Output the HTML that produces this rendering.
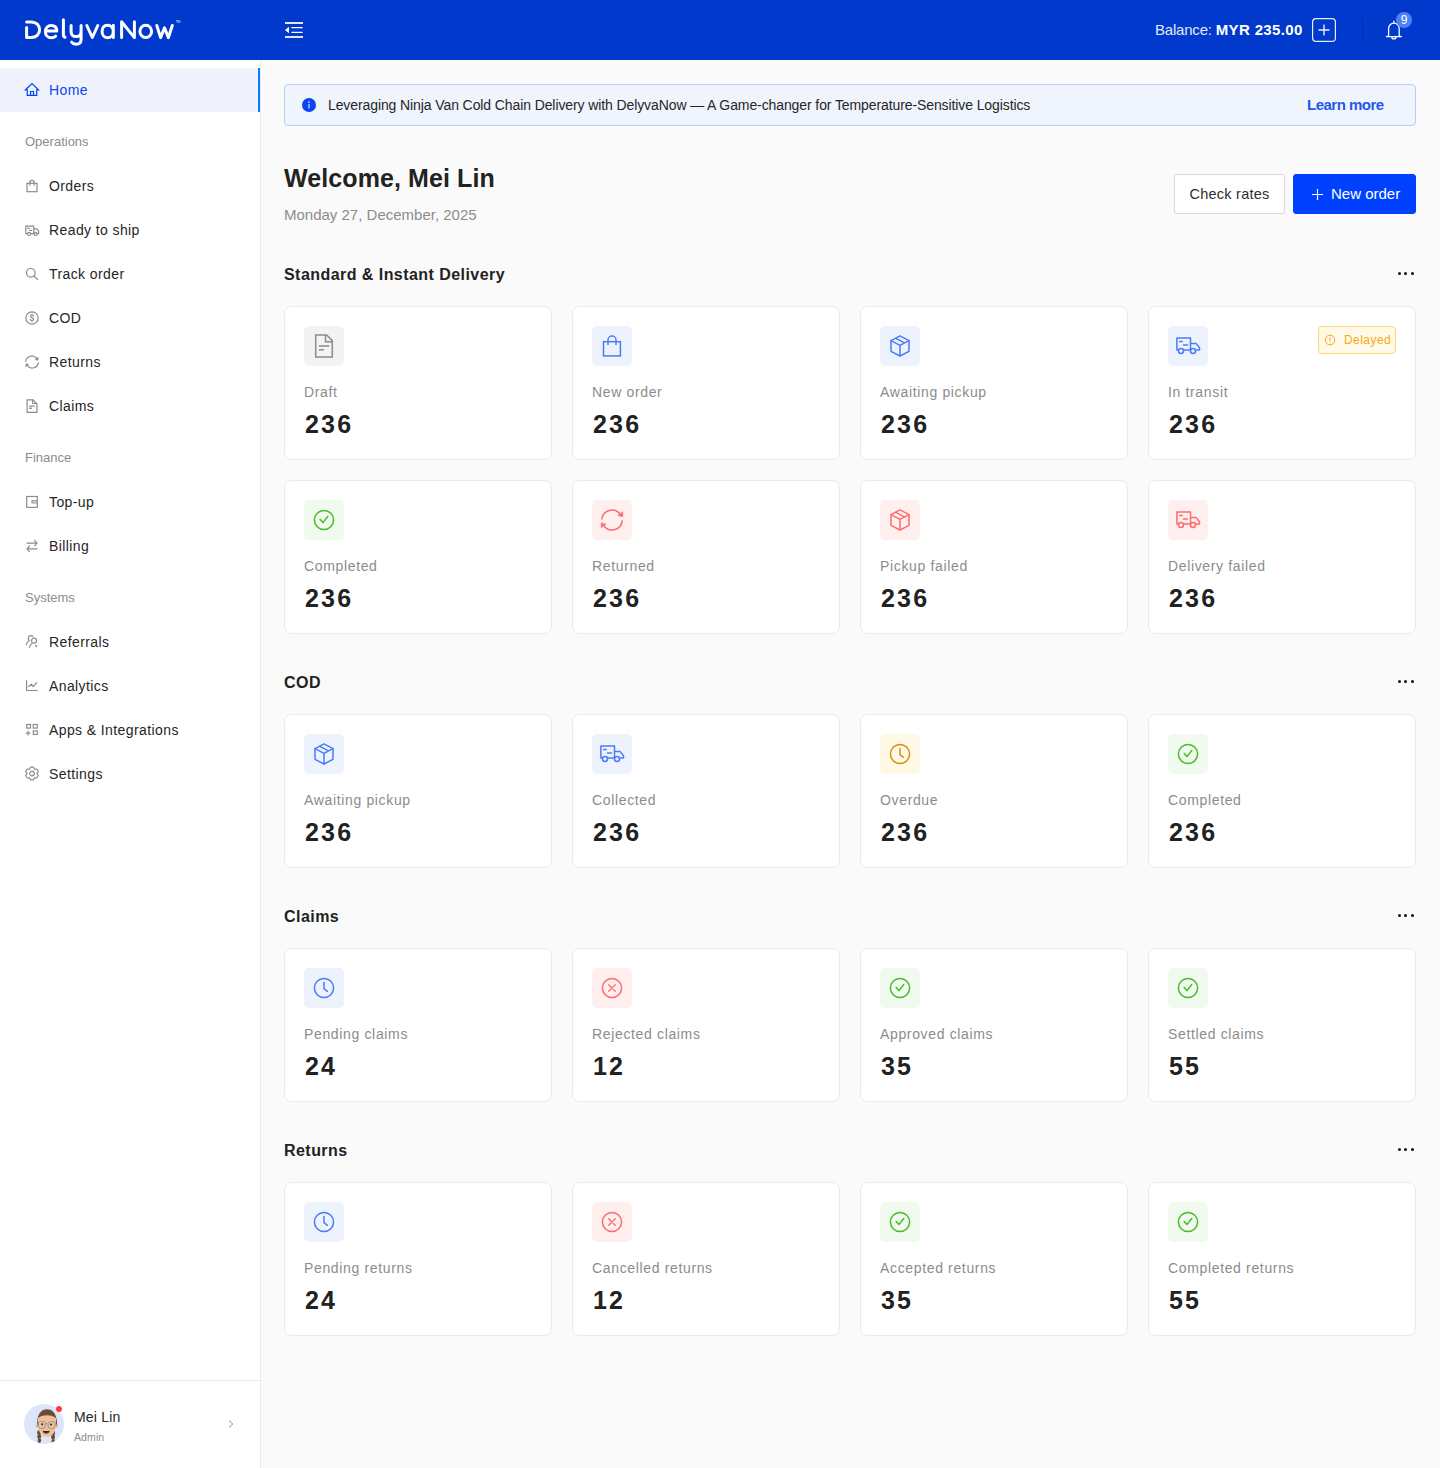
<!DOCTYPE html>
<html><head><meta charset="utf-8">
<style>
*{box-sizing:border-box;margin:0;padding:0}
html,body{width:1440px;height:1468px;overflow:hidden}
body{font-family:"Liberation Sans",sans-serif;background:#FAFAFA;color:#222;position:relative}
.abs{position:absolute}
.hdr{position:absolute;left:0;top:0;width:1440px;height:60px;background:#0039CC}
.side{position:absolute;left:0;top:60px;width:261px;height:1408px;background:#fff;border-right:1px solid #EBEBEB}
.nav{position:absolute;left:0;width:260px;height:44px;padding-left:24px;font-size:14px;letter-spacing:0.4px;color:#262626;line-height:44px;white-space:nowrap}
.nav svg{position:absolute;left:24px;top:14px;width:16px;height:16px;color:#8C8C8C}
.nav span{position:absolute;left:49px;top:0}
.nav.active{background:#F0F3FC;color:#0B45F5}
.nav.active svg{color:#0041FF}
.nav.active:after{content:"";position:absolute;right:0;top:0;width:2px;height:44px;background:#0A7BFF}
.lbl{position:absolute;left:25px;font-size:13px;color:#8C8C8C;line-height:16px}
.card{position:absolute;width:268px;height:154px;background:#fff;border:1px solid #EBEBEB;border-radius:8px}
.ib{position:absolute;left:19px;top:19px;width:40px;height:40px;border-radius:5px}
.ib svg{position:absolute;left:0;top:0;width:40px;height:40px}
.cl{position:absolute;left:19px;top:76px;font-size:14px;letter-spacing:0.65px;color:#8C8C8C;line-height:18px;white-space:nowrap}
.cv{position:absolute;left:20px;top:103px;font-size:25px;letter-spacing:2.2px;font-weight:bold;color:#222;line-height:28px}
.sec{position:absolute;left:284px;font-size:16px;letter-spacing:0.45px;font-weight:bold;color:#222;line-height:20px}
.dots{position:absolute;left:1398.2px;width:18px;height:4px}
.dots i{position:absolute;top:0;width:3px;height:3px;border-radius:50%;background:#111}
.g{background:#F3F3F3;color:#8C8C8C}
.b{background:#EEF2FD;color:#497BFA}
.r{background:#FFEFEF;color:#FF6B6B}
.gr{background:#F1FAEE;color:#4CBB2B}
.y{background:#FFF8E6;color:#D4900F}
.badge{position:absolute;left:169px;top:19px;width:78px;height:28px;border:1px solid #FFD36E;background:#FFFAE8;border-radius:4px;font-size:12px;letter-spacing:0.45px;color:#F8A91A;line-height:26px}
.badge svg{position:absolute;left:5px;top:7px}
.badge span{position:absolute;left:25px;top:0}
.banner{position:absolute;left:284px;top:84px;width:1132px;height:42px;background:#F0F4FD;border:1px solid #B8CDF7;border-radius:4px}
.btn{position:absolute;top:174px;height:40px;border-radius:3px;font-size:15px;line-height:38px;white-space:nowrap}
</style></head>
<body>
<div class="hdr">
  <svg class="abs" style="left:0;top:0" width="200" height="60" viewBox="0 0 200 60" fill="none" stroke="#fff" stroke-width="3" stroke-linecap="round" stroke-linejoin="round">
    <path d="M26.6 21.9H31.2C36.2 21.9 39.6 25.2 39.6 29.7C39.6 34.2 36.2 37.5 31.2 37.5H26.6V27.6"/>
    <path d="M45.5 30.9H56.8C56.8 27.3 54.6 25.5 51.2 25.5C47.7 25.5 45.4 28.2 45.4 31.7C45.4 35.2 47.9 37.8 51.3 37.8C53.3 37.8 54.8 37.1 55.6 36.2"/>
    <path d="M63.4 19.7V34.8C63.4 36.2 64 37 65 37.3"/>
    <path d="M71.1 25.5V31.4C71.1 34.6 73.1 36.5 76.1 36.5C79.1 36.5 81.1 34.6 81.1 31.4V25.5M81.1 31.4V39.2C81.1 42.4 79 44.2 76.1 44.2C74.3 44.2 72.6 43.5 71.6 42.2"/>
    <path d="M86.8 25.5L92.3 37.5L97.8 25.5"/>
    <path d="M113.3 25.3V37.6M113.3 31.5C113.3 27.9 110.8 25.2 107.4 25.2C104 25.2 102.1 27.9 102.1 31.5C102.1 35 104.1 37.7 107.4 37.7C110.8 37.7 113.3 35 113.3 31.5"/>
    <path d="M121.6 37.6V21.7L134.4 37.6V21.7"/>
    <ellipse cx="145.75" cy="31.4" rx="5.85" ry="6.2"/>
    <path d="M156.8 25.5L160.6 37.6L164.5 27.8L168.4 37.6L172.3 25.5"/>
    <path d="M176.3 20.6H178M177.15 20.6V22.5M178.6 22.5V20.6L179.3 21.4L180 20.6V22.5" stroke-width="0.5"/>
  </svg>
  <svg class="abs" style="left:284px;top:21px" width="20" height="18" viewBox="0 0 20 18" fill="#fff">
    <rect x="1" y="1" width="18" height="2" opacity="0.88"/>
    <rect x="7.3" y="6" width="11.4" height="1.3" rx="0.6"/>
    <rect x="7.3" y="10.8" width="11.4" height="1.3" rx="0.6"/>
    <rect x="1" y="15" width="18" height="2" opacity="0.88"/>
    <path d="M5 5.8V12.2L1 9Z"/>
  </svg>
  <div class="abs" style="left:1155px;top:21px;font-size:15px;line-height:18px;color:#fff;white-space:nowrap"><span style="color:#E3E8F7;letter-spacing:-0.2px">Balance: </span><b style="letter-spacing:0.35px">MYR 235.00</b></div>
  <svg class="abs" style="left:1312px;top:18px" width="24" height="24" viewBox="0 0 24 24" fill="none" stroke="#E8ECF8" stroke-width="1.2">
    <rect x="0.6" y="0.6" width="22.8" height="22.8" rx="3.5"/>
    <path d="M6.4 12H17.6M12 6.4V17.6" stroke-width="1.4"/>
  </svg>
  <div class="abs" style="left:1362px;top:18px;width:1px;height:24px;background:#0030AA"></div>
  <svg class="abs" style="left:1384px;top:18px" width="20" height="24" viewBox="0 0 20 24" fill="none" stroke="#fff" stroke-width="1.3" stroke-linejoin="round" stroke-linecap="round">
    <path d="M4.6 17.6V10.5A5.3 5.3 0 0 1 15.2 10.5V17.6C15.2 18.2 16 18.6 17.4 18.6H2.4C3.8 18.6 4.6 18.2 4.6 17.6Z"/>
    <path d="M9.9 3.2V5.1M7.9 18.9A2 2 0 0 0 11.9 18.9"/>
  </svg>
  <div class="abs" style="left:1396px;top:12px;width:16px;height:16px;border-radius:50%;background:#5080F8;color:#fff;font-size:12px;line-height:16px;text-align:center">9</div>
</div>
<div class="side">
<div class="nav active" style="top:8px"><svg viewBox="0 0 16 16" fill="none" stroke="currentColor" stroke-width="1.2" stroke-linecap="round" stroke-linejoin="round"><path d="M1.5 7.8L8 1.5L14.5 7.8H12.75V13.3H3.25V7.8Z" stroke-linejoin="miter" stroke-linecap="butt"/><path d="M6.6 13.3V9.5H9.5V13.3" stroke-linejoin="miter"/></svg><span>Home</span></div>
<div class="lbl" style="top:74px">Operations</div>
<div class="nav" style="top:104px"><svg viewBox="0 0 16 16" fill="none" stroke="currentColor" stroke-width="1.2" stroke-linecap="round" stroke-linejoin="round"><rect x="3" y="5.3" width="10" height="8.4" stroke-linejoin="miter"/><path d="M5.8 7.2V4.6A2.2 2.2 0 0 1 10.2 4.6V7.2"/></svg><span>Orders</span></div>
<div class="nav" style="top:148px"><svg viewBox="0 0 16 16" fill="none" stroke="currentColor" stroke-width="1.2" stroke-linecap="round" stroke-linejoin="round"><path d="M3.3 11.6H1.8V4.2H9.8V11.6M9.8 6.8H12.8L14.6 9.2V11.6H13M9.8 11.6H7"/><circle cx="5.1" cy="11.9" r="1.5"/><circle cx="11.5" cy="11.9" r="1.5"/><path d="M3.6 6.3H5.2M5.6 8.3H7.8"/></svg><span>Ready to ship</span></div>
<div class="nav" style="top:192px"><svg viewBox="0 0 16 16" fill="none" stroke="currentColor" stroke-width="1.2" stroke-linecap="round" stroke-linejoin="round"><circle cx="6.8" cy="6.8" r="4.3"/><path d="M10 10L13.6 13.6"/></svg><span>Track order</span></div>
<div class="nav" style="top:236px"><svg viewBox="0 0 16 16" fill="none" stroke="currentColor" stroke-width="1.2" stroke-linecap="round" stroke-linejoin="round"><circle cx="8" cy="8" r="6.2"/><path d="M9.6 5.9C9.3 5.3 8.7 5 8 5C7 5 6.4 5.5 6.4 6.3C6.4 7.9 9.7 7.2 9.7 9.1C9.7 9.9 9 10.5 8 10.5C7.2 10.5 6.6 10.1 6.3 9.5M8 4.2V5M8 10.5V11.6"/></svg><span>COD</span></div>
<div class="nav" style="top:280px"><svg viewBox="0 0 16 16" fill="none" stroke="currentColor" stroke-width="1.2" stroke-linecap="round" stroke-linejoin="round"><path d="M1.7 7.4A6.1 6.1 0 0 1 12.6 4.4M14.3 8.6A6.1 6.1 0 0 1 3.4 11.6"/><path d="M14.1 3.5V6.2L11.4 5.7Z M1.9 12.5V9.8L4.6 10.3Z" fill="currentColor" stroke-width="0.6"/></svg><span>Returns</span></div>
<div class="nav" style="top:324px"><svg viewBox="0 0 16 16" fill="none" stroke="currentColor" stroke-width="1.2" stroke-linecap="round" stroke-linejoin="round"><path d="M3.1 1.8H8.9L12.9 5.8V14.3H3.1Z" stroke-linejoin="miter"/><path d="M8.7 1.8V5.5H12.9" stroke-linejoin="miter"/><path d="M5.2 8.1H10.8M5.2 10.3H7.8" stroke-linecap="butt" stroke-width="1.4"/></svg><span>Claims</span></div>
<div class="lbl" style="top:390px">Finance</div>
<div class="nav" style="top:420px"><svg viewBox="0 0 16 16" fill="none" stroke="currentColor" stroke-width="1.2" stroke-linecap="round" stroke-linejoin="round"><rect x="2.7" y="2.5" width="10.6" height="10.9" stroke-linejoin="miter"/><path d="M13.3 6.9H8V9H13.3" stroke-linejoin="miter"/></svg><span>Top-up</span></div>
<div class="nav" style="top:464px"><svg viewBox="0 0 16 16" fill="none" stroke="currentColor" stroke-width="1.2" stroke-linecap="round" stroke-linejoin="round"><path d="M3 5.1H13M10.6 2.3L13 5.1L10.6 7.9M13 10.8H3M5.5 8L3 10.8L5.5 13.6"/></svg><span>Billing</span></div>
<div class="lbl" style="top:530px">Systems</div>
<div class="nav" style="top:560px"><svg viewBox="0 0 16 16" fill="none" stroke="currentColor" stroke-width="1.2" stroke-linecap="round" stroke-linejoin="round"><path d="M8.9 2.4A2.5 2.5 0 1 0 5 6.1M5.4 6.5C3.8 7.4 2.6 8.9 2.3 10.7"/><circle cx="10" cy="6.7" r="2.5"/><path d="M7.8 9.8C6.6 10.6 5.7 11.8 5.4 13.3"/><path d="M11.4 12H13M12.2 11.2V12.8" stroke-width="1"/></svg><span>Referrals</span></div>
<div class="nav" style="top:604px"><svg viewBox="0 0 16 16" fill="none" stroke="currentColor" stroke-width="1.2" stroke-linecap="round" stroke-linejoin="round"><path d="M2.55 2.3V12.5H13.7" stroke-linecap="butt" stroke-linejoin="miter"/><path d="M4.5 8.6L7.35 6.2L9.3 8.6L12.8 4.7"/></svg><span>Analytics</span></div>
<div class="nav" style="top:648px"><svg viewBox="0 0 16 16" fill="none" stroke="currentColor" stroke-width="1.2" stroke-linecap="round" stroke-linejoin="round"><rect x="2.7" y="2.5" width="3.8" height="3.6" stroke-linejoin="miter"/><rect x="9.3" y="2.5" width="4" height="3.6" stroke-linejoin="miter"/><rect x="9.3" y="8.9" width="4" height="3.6" stroke-linejoin="miter"/><path d="M4.1 8.7V13.5M1.7 11.1H6.5" stroke-linecap="butt"/></svg><span>Apps &amp; Integrations</span></div>
<div class="nav" style="top:692px"><svg viewBox="0 0 16 16" fill="none" stroke="currentColor" stroke-width="1.2" stroke-linecap="round" stroke-linejoin="round"><circle cx="8" cy="7.5" r="2.3"/><path d="M5.55 3.26 L6.52 1.07 L9.48 1.07 L10.45 3.26 L12.83 3.00 L14.31 5.57 L12.90 7.50 L14.31 9.43 L12.83 12.00 L10.45 11.74 L9.48 13.93 L6.52 13.93 L5.55 11.74 L3.17 12.00 L1.69 9.43 L3.10 7.50 L1.69 5.57 L3.17 3.00Z"/></svg><span>Settings</span></div>

  <div class="abs" style="left:0;top:1320px;width:260px;height:1px;background:#EBEBEB"></div>
  <div class="abs" style="left:24px;top:1344px;width:40px;height:40px;border-radius:50%;background:#DCE6FA;overflow:hidden">
    <svg width="40" height="40" viewBox="0 0 40 40">
      <g fill="#6A4B38">
        <ellipse cx="15.2" cy="28.5" rx="2.1" ry="2.6"/><ellipse cx="15.2" cy="32.6" rx="2" ry="2.4"/><ellipse cx="15.4" cy="36.6" rx="1.7" ry="2.3"/>
        <ellipse cx="29" cy="29" rx="2.1" ry="2.6"/><ellipse cx="29" cy="33.1" rx="2" ry="2.4"/><ellipse cx="29.2" cy="37.2" rx="1.7" ry="2.3"/>
        <path d="M13 22C12.6 11 16.5 5.2 23 5.2C29.5 5.2 33.4 11 33 22Z"/>
      </g>
      <circle cx="13.1" cy="22" r="1.4" fill="#E2AE88"/><circle cx="32.8" cy="22" r="1.4" fill="#E2AE88"/>
      <path d="M13.8 14C13.8 24 14.5 32.8 22.9 32.8C31.3 32.8 32 24 32 14C29 11.8 26 11.2 22.9 11.2C19.8 11.2 16.8 11.8 13.8 14Z" fill="#EDBF9B"/>
      <g fill="none" stroke="#8E8E8E" stroke-width="0.8"><rect x="14.4" y="17.6" width="6.8" height="6.8" rx="2"/><rect x="24.2" y="17.6" width="6.8" height="6.8" rx="2"/><path d="M21.2 19.8H24.2"/></g>
      <circle cx="18.2" cy="20.3" r="1" fill="#222"/><circle cx="27" cy="20.5" r="1" fill="#222"/>
      <path d="M18.6 26.7C20.5 27.2 24 27.2 25.8 26.7C25.3 28.6 24 29.7 22.2 29.7C20.4 29.7 19.1 28.6 18.6 26.7Z" fill="#3A2424"/>
      <path d="M19.6 28.6C21 29.2 23.4 29.2 24.8 28.6C24.2 29.4 23.2 29.7 22.2 29.7C21.2 29.7 20.2 29.4 19.6 28.6Z" fill="#C97A7A"/>
    </svg>
  </div>
  <div class="abs" style="left:56px;top:1346px;width:6px;height:6px;border-radius:50%;background:#FF3B40"></div>
  <div class="abs" style="left:74px;top:1349px;font-size:14px;line-height:16px;color:#262626;letter-spacing:0.2px">Mei Lin</div>
  <div class="abs" style="left:74px;top:1370.5px;font-size:10.5px;line-height:12px;color:#8C8C8C;letter-spacing:0.1px">Admin</div>
  <svg class="abs" style="left:226px;top:1359px" width="10" height="10" viewBox="0 0 10 10" fill="none" stroke="#8C8C8C" stroke-width="1"><path d="M3 1.5L6.8 5L3 8.5"/></svg>
</div>

<div class="banner">
  <svg class="abs" style="left:17px;top:13px" width="14" height="14" viewBox="0 0 14 14"><circle cx="7" cy="7" r="7" fill="#0A45F5"/><rect x="6.2" y="6" width="1.6" height="4.4" fill="#A8BEFF"/><rect x="6.2" y="3.4" width="1.6" height="1.4" fill="#DCE6FF"/></svg>
  <div class="abs" style="left:43px;top:12px;font-size:14px;line-height:17px;color:#262626;white-space:nowrap;letter-spacing:-0.1px">Leveraging Ninja Van Cold Chain Delivery with DelyvaNow — A Game-changer for Temperature-Sensitive Logistics</div>
  <div class="abs" style="left:1022px;top:11px;font-size:15px;line-height:18px;color:#1F58EE;font-weight:bold;white-space:nowrap;letter-spacing:-0.5px">Learn more</div>
</div>

<div class="abs" style="left:284px;top:163px;font-size:25px;line-height:30px;font-weight:bold;color:#222;white-space:nowrap;letter-spacing:0.1px">Welcome, Mei Lin</div>
<div class="abs" style="left:284px;top:206px;font-size:15px;line-height:18px;color:#8C8C8C;white-space:nowrap">Monday 27, December, 2025</div>

<div class="btn" style="left:1174px;width:111px;background:#fff;border:1px solid #D9D9D9;color:#2E2E2E;text-align:center;font-size:14.5px;letter-spacing:0.25px">Check rates</div>
<div class="btn" style="left:1293px;width:123px;background:#0041FF;border:1px solid #0041FF;color:#fff">
  <svg class="abs" style="left:17.5px;top:13.5px" width="11" height="11" viewBox="0 0 11 11" stroke="#fff" stroke-width="1.15"><path d="M0 5.5H11M5.5 0V11"/></svg>
  <span class="abs" style="left:37px;top:0">New order</span>
</div>

<div class="sec" style="top:265px">Standard &amp; Instant Delivery</div><div class="dots" style="top:272.4px"><i style="left:0"></i><i style="left:6.25px"></i><i style="left:12.5px"></i></div>
<div class="card" style="left:284px;top:306px"><div class="ib g"><svg viewBox="0 0 40 40" fill="none" stroke="currentColor" stroke-width="1.5" stroke-linecap="round" stroke-linejoin="round"><path d="M11.7 8.9H22.7L28.3 14.6V31.1H11.7Z" stroke-linecap="butt" stroke-linejoin="miter"/><path d="M21.5 8.9V15.8H28.3" stroke-linecap="butt" stroke-linejoin="miter"/><path d="M14.9 20.1H25.2M14.9 23.7H19.9" stroke-linecap="butt"/></svg></div><div class="cl">Draft</div><div class="cv">236</div></div>
<div class="card" style="left:572px;top:306px"><div class="ib b"><svg viewBox="0 0 40 40" fill="none" stroke="currentColor" stroke-width="1.5" stroke-linecap="round" stroke-linejoin="round"><rect x="11.5" y="15.7" width="16.9" height="14.2" stroke-linejoin="miter"/><path d="M16 18.9V14A4 4 0 0 1 24 14V18.9" stroke-linecap="butt"/></svg></div><div class="cl">New order</div><div class="cv">236</div></div>
<div class="card" style="left:860px;top:306px"><div class="ib b"><svg viewBox="0 0 40 40" fill="none" stroke="currentColor" stroke-width="1.5" stroke-linecap="round" stroke-linejoin="round"><path d="M20 9.9L29 14.6V25.3L20 30L11 25.3V14.6Z"/><path d="M11 14.6L20 19.3L29 14.6M20 19.3V30M15.8 12.3L24.5 16.9"/></svg></div><div class="cl">Awaiting pickup</div><div class="cv">236</div></div>
<div class="card" style="left:1148px;top:306px"><div class="ib b"><svg viewBox="0 0 40 40" fill="none" stroke="currentColor" stroke-width="1.5" stroke-linecap="round" stroke-linejoin="round"><path d="M10.4 24H8.9V12H22.5V24M22.5 17.4H28L31.5 21.8V24H27.5M22.5 24H15.5"/><circle cx="13" cy="25" r="2.5"/><circle cx="25" cy="25" r="2.5"/><path d="M11.7 15.6H14.2M15.5 19H19.5"/></svg></div><div class="cl">In transit</div><div class="cv">236</div><div class="badge"><svg width="12" height="12" viewBox="0 0 12 12" fill="none" stroke="#F8A91A" stroke-width="1"><circle cx="6" cy="6" r="4.8"/><path d="M6 3.6V6.6M6 8.1V8.3" stroke-linecap="round"/></svg><span>Delayed</span></div></div>
<div class="card" style="left:284px;top:480px"><div class="ib gr"><svg viewBox="0 0 40 40" fill="none" stroke="currentColor" stroke-width="1.5" stroke-linecap="round" stroke-linejoin="round"><circle cx="20" cy="20" r="9.6"/><path d="M16.2 19.4L18.9 22.6L23.8 16.5"/></svg></div><div class="cl">Completed</div><div class="cv">236</div></div>
<div class="card" style="left:572px;top:480px"><div class="ib r"><svg viewBox="0 0 40 40" fill="none" stroke="currentColor" stroke-width="1.5" stroke-linecap="round" stroke-linejoin="round"><path d="M9.8 19.5A10.2 10.2 0 0 1 28.2 14.2M30.2 20.2A10.2 10.2 0 0 1 11.8 25.8" stroke-linecap="butt"/><path d="M30.8 12V16.7L26 15.6Z M9.2 23V27.8L13.9 24.4Z" fill="currentColor" stroke-width="0.6"/></svg></div><div class="cl">Returned</div><div class="cv">236</div></div>
<div class="card" style="left:860px;top:480px"><div class="ib r"><svg viewBox="0 0 40 40" fill="none" stroke="currentColor" stroke-width="1.5" stroke-linecap="round" stroke-linejoin="round"><path d="M20 9.9L29 14.6V25.3L20 30L11 25.3V14.6Z"/><path d="M11 14.6L20 19.3L29 14.6M20 19.3V30M15.8 12.3L24.5 16.9"/></svg></div><div class="cl">Pickup failed</div><div class="cv">236</div></div>
<div class="card" style="left:1148px;top:480px"><div class="ib r"><svg viewBox="0 0 40 40" fill="none" stroke="currentColor" stroke-width="1.5" stroke-linecap="round" stroke-linejoin="round"><path d="M10.4 24H8.9V12H22.5V24M22.5 17.4H28L31.5 21.8V24H27.5M22.5 24H15.5"/><circle cx="13" cy="25" r="2.5"/><circle cx="25" cy="25" r="2.5"/><path d="M11.7 15.6H14.2M15.5 19H19.5"/></svg></div><div class="cl">Delivery failed</div><div class="cv">236</div></div>
<div class="sec" style="top:673px">COD</div><div class="dots" style="top:680.4px"><i style="left:0"></i><i style="left:6.25px"></i><i style="left:12.5px"></i></div>
<div class="card" style="left:284px;top:714px"><div class="ib b"><svg viewBox="0 0 40 40" fill="none" stroke="currentColor" stroke-width="1.5" stroke-linecap="round" stroke-linejoin="round"><path d="M20 9.9L29 14.6V25.3L20 30L11 25.3V14.6Z"/><path d="M11 14.6L20 19.3L29 14.6M20 19.3V30M15.8 12.3L24.5 16.9"/></svg></div><div class="cl">Awaiting pickup</div><div class="cv">236</div></div>
<div class="card" style="left:572px;top:714px"><div class="ib b"><svg viewBox="0 0 40 40" fill="none" stroke="currentColor" stroke-width="1.5" stroke-linecap="round" stroke-linejoin="round"><path d="M10.4 24H8.9V12H22.5V24M22.5 17.4H28L31.5 21.8V24H27.5M22.5 24H15.5"/><circle cx="13" cy="25" r="2.5"/><circle cx="25" cy="25" r="2.5"/><path d="M11.7 15.6H14.2M15.5 19H19.5"/></svg></div><div class="cl">Collected</div><div class="cv">236</div></div>
<div class="card" style="left:860px;top:714px"><div class="ib y"><svg viewBox="0 0 40 40" fill="none" stroke="currentColor" stroke-width="1.5" stroke-linecap="round" stroke-linejoin="round"><circle cx="20" cy="20" r="9.6"/><path d="M20 14.6V20.7L23.4 23.3"/></svg></div><div class="cl">Overdue</div><div class="cv">236</div></div>
<div class="card" style="left:1148px;top:714px"><div class="ib gr"><svg viewBox="0 0 40 40" fill="none" stroke="currentColor" stroke-width="1.5" stroke-linecap="round" stroke-linejoin="round"><circle cx="20" cy="20" r="9.6"/><path d="M16.2 19.4L18.9 22.6L23.8 16.5"/></svg></div><div class="cl">Completed</div><div class="cv">236</div></div>
<div class="sec" style="top:907px">Claims</div><div class="dots" style="top:914.4px"><i style="left:0"></i><i style="left:6.25px"></i><i style="left:12.5px"></i></div>
<div class="card" style="left:284px;top:948px"><div class="ib b"><svg viewBox="0 0 40 40" fill="none" stroke="currentColor" stroke-width="1.5" stroke-linecap="round" stroke-linejoin="round"><circle cx="20" cy="20" r="9.6"/><path d="M20 14.6V20.7L23.4 23.3"/></svg></div><div class="cl">Pending claims</div><div class="cv">24</div></div>
<div class="card" style="left:572px;top:948px"><div class="ib r"><svg viewBox="0 0 40 40" fill="none" stroke="currentColor" stroke-width="1.5" stroke-linecap="round" stroke-linejoin="round"><circle cx="20" cy="20" r="9.6"/><path d="M16.7 16.7L23.3 23.3M23.3 16.7L16.7 23.3" stroke-width="1.3"/></svg></div><div class="cl">Rejected claims</div><div class="cv">12</div></div>
<div class="card" style="left:860px;top:948px"><div class="ib gr"><svg viewBox="0 0 40 40" fill="none" stroke="currentColor" stroke-width="1.5" stroke-linecap="round" stroke-linejoin="round"><circle cx="20" cy="20" r="9.6"/><path d="M16.2 19.4L18.9 22.6L23.8 16.5"/></svg></div><div class="cl">Approved claims</div><div class="cv">35</div></div>
<div class="card" style="left:1148px;top:948px"><div class="ib gr"><svg viewBox="0 0 40 40" fill="none" stroke="currentColor" stroke-width="1.5" stroke-linecap="round" stroke-linejoin="round"><circle cx="20" cy="20" r="9.6"/><path d="M16.2 19.4L18.9 22.6L23.8 16.5"/></svg></div><div class="cl">Settled claims</div><div class="cv">55</div></div>
<div class="sec" style="top:1141px">Returns</div><div class="dots" style="top:1148.4px"><i style="left:0"></i><i style="left:6.25px"></i><i style="left:12.5px"></i></div>
<div class="card" style="left:284px;top:1182px"><div class="ib b"><svg viewBox="0 0 40 40" fill="none" stroke="currentColor" stroke-width="1.5" stroke-linecap="round" stroke-linejoin="round"><circle cx="20" cy="20" r="9.6"/><path d="M20 14.6V20.7L23.4 23.3"/></svg></div><div class="cl">Pending returns</div><div class="cv">24</div></div>
<div class="card" style="left:572px;top:1182px"><div class="ib r"><svg viewBox="0 0 40 40" fill="none" stroke="currentColor" stroke-width="1.5" stroke-linecap="round" stroke-linejoin="round"><circle cx="20" cy="20" r="9.6"/><path d="M16.7 16.7L23.3 23.3M23.3 16.7L16.7 23.3" stroke-width="1.3"/></svg></div><div class="cl">Cancelled returns</div><div class="cv">12</div></div>
<div class="card" style="left:860px;top:1182px"><div class="ib gr"><svg viewBox="0 0 40 40" fill="none" stroke="currentColor" stroke-width="1.5" stroke-linecap="round" stroke-linejoin="round"><circle cx="20" cy="20" r="9.6"/><path d="M16.2 19.4L18.9 22.6L23.8 16.5"/></svg></div><div class="cl">Accepted returns</div><div class="cv">35</div></div>
<div class="card" style="left:1148px;top:1182px"><div class="ib gr"><svg viewBox="0 0 40 40" fill="none" stroke="currentColor" stroke-width="1.5" stroke-linecap="round" stroke-linejoin="round"><circle cx="20" cy="20" r="9.6"/><path d="M16.2 19.4L18.9 22.6L23.8 16.5"/></svg></div><div class="cl">Completed returns</div><div class="cv">55</div></div>

</body></html>
